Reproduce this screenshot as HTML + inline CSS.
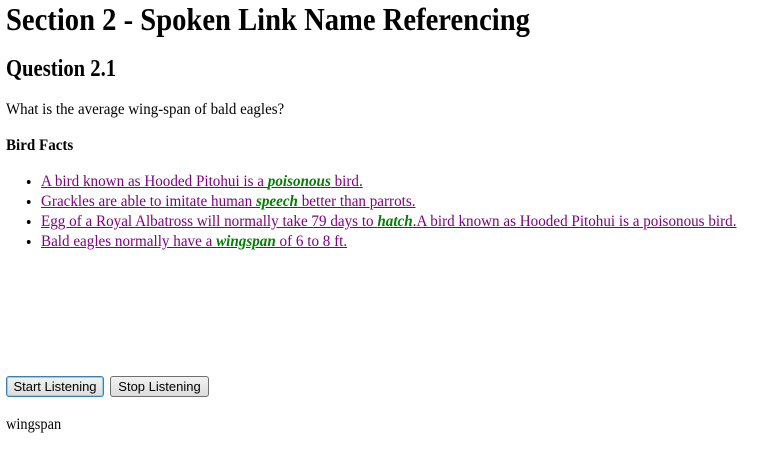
<!DOCTYPE html>
<html><head><meta charset="utf-8"><style>
body{margin:0;background:#fff;font-family:"Liberation Serif",serif;color:#000;width:761px;height:453px;overflow:hidden;position:relative}
.a{position:absolute;left:6px;white-space:nowrap;margin:0;transform-origin:0 0}
h1{font-size:32px;line-height:37px;font-weight:bold}
h2{font-size:24px;line-height:28px;font-weight:bold}
p{font-size:16px;line-height:19px}
ul{position:absolute;left:0;top:172px;margin:0;padding:0 0 0 41px;font-size:16px;line-height:20px;list-style:disc;transform:scaleX(0.945);transform-origin:41px 0}
ul li{color:#000}
a{color:#800080;text-decoration:underline;white-space:nowrap}
a b{color:#008000;font-style:italic}
button{position:absolute;top:376px;height:21px;font-family:"Liberation Sans",sans-serif;font-size:13px;padding:0;border:1px solid #707070;border-radius:3px;background:linear-gradient(#f2f2f2,#dcdcdc);color:#000}
</style></head><body>
<h1 class="a" style="top:1px;transform:scaleX(0.894)">Section 2 - Spoken Link Name Referencing</h1>
<h2 class="a" style="top:55px;transform:scaleX(0.86)">Question 2.1</h2>
<p class="a" style="top:100px;transform:scaleX(0.936)">What is the average wing-span of bald eagles?</p>
<p class="a" style="top:136px;font-weight:bold;transform:scaleX(0.94)">Bird Facts</p>
<ul>
<li><a>A bird known as Hooded Pitohui is a <b>poisonous</b> bird.</a></li>
<li><a>Grackles are able to imitate human <b>speech</b> better than parrots.</a></li>
<li><a>Egg of a Royal Albatross will normally take 79 days to <b>hatch</b>.A bird known as Hooded Pitohui is a poisonous bird.</a></li>
<li><a>Bald eagles normally have a <b>wingspan</b> of 6 to 8 ft.</a></li>
</ul>
<button style="left:6px;width:98px;border-color:#3c7fb1;box-shadow:inset 0 0 0 1px #8ed0ee">Start Listening</button>
<button style="left:110px;width:99px">Stop Listening</button>
<p class="a" style="top:415px;transform:scaleX(0.9)">wingspan</p>
</body></html>
